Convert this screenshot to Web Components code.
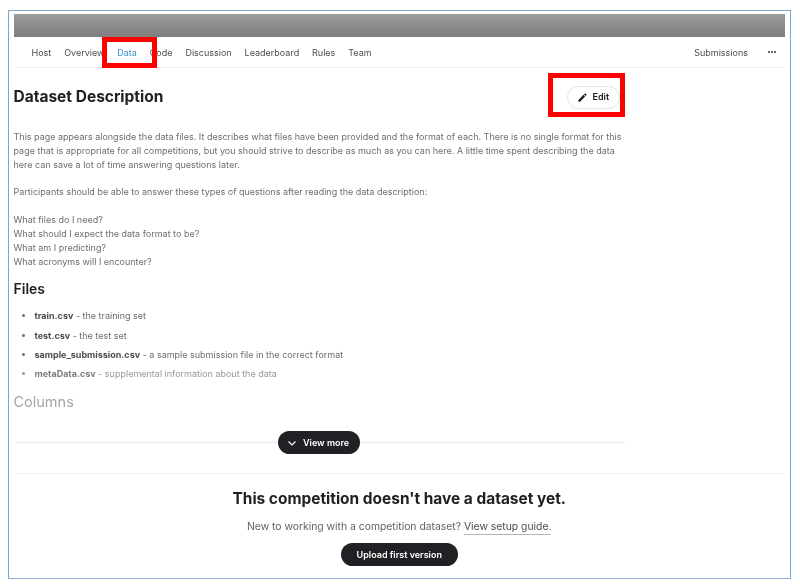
<!DOCTYPE html>
<html>
<head>
<meta charset="utf-8">
<title>Dataset Description</title>
<style>
  html, body { margin: 0; background: #fff; }
  body { font-family: Inter, "Liberation Sans", sans-serif; color: #202124; }
</style>
</head>
<body>
<shot-frame>
  <top-nav></top-nav>
  <data-description></data-description>
  <view-more></view-more>
  <empty-dataset></empty-dataset>
  <red-mark style="left:93px;top:26px;width:45px;height:21px"></red-mark>
  <red-mark style="left:539px;top:62px;width:67px;height:34px"></red-mark>
</shot-frame>

<script>
class ShotFrame extends HTMLElement {
    constructor() {
        super();
        this.attachShadow({mode: "open"}).innerHTML = `
        <style>
            :host {
                display: block;
                position: relative;
                box-sizing: border-box;
                margin: 10px 0 0 8px;
                width: 783px;
                height: 569px;
                border: 1.5px solid #7ea5cb;
                border-bottom-color: #8fb0d0;
                padding: 2.5px 5px 0 4.5px;
                overflow: hidden;
                background: #fff;
                filter: blur(.35px);
            }
            .banner {
                height: 23px;
                background: linear-gradient(#9b9b9b, #7f7f7f);
            }
        </style>
        <div class="banner"></div>
        <slot></slot>
        `;
    }
}

class TopNav extends HTMLElement {
    constructor() {
        super();
        const tabs = ["Host", "Overview", "Data", "Code", "Discussion", "Leaderboard", "Rules", "Team"];
        this.attachShadow({mode: "open"}).innerHTML = `
        <style>
            :host {
                display: flex;
                align-items: center;
                box-sizing: border-box;
                height: 31px;
                padding: 1px 9px 0 18px;
                border-bottom: 1px solid #efefef;
                font-size: 9px;
                color: #4a4c50;
            }
            .tabs { display: flex; gap: 12.9px; flex: 1; }
            .on { color: #3a94c8; }
            .more { margin-left: 20px; display: flex; gap: 1px; }
            .more i { width: 2px; height: 2px; border-radius: 50%; background: #333; display: block; }
        </style>
        <div class="tabs">
            ${tabs.map(t => `<span class="${t == "Data" ? "on" : ""}">${t}</span>`).join("")}
        </div>
        <span>Submissions</span>
        <span class="more"><i></i><i></i><i></i></span>
        `;
    }
}

class DataDescription extends HTMLElement {
    constructor() {
        super();
        this.attachShadow({mode: "open"}).innerHTML = `
        <style>
            :host {
                display: block;
                width: 611px;
                position: relative;
                font-size: 9px;
                line-height: 14.2px;
                color: #6b6e72;
            }
            header {
                display: flex;
                align-items: center;
                justify-content: space-between;
                height: 58px;
                padding: 1px 5px 0 0;
                box-sizing: border-box;
            }
            h1 { margin: 0; font-size: 15.5px; font-weight: 700; color: #202124; }
            .edit {
                display: flex;
                align-items: center;
                gap: 5px;
                box-sizing: border-box;
                height: 23px;
                width: 53px;
                padding-left: 9px;
                border: 1px solid #e4e4e4;
                border-radius: 12px;
                font-size: 9px;
                font-weight: 600;
                color: #202124;
            }
            p { margin: 0 0 13.2px; }
            .lead { margin-top: 4px; }
            .last { margin-bottom: 10.8px; }
            h2 { margin: 0 0 12px; font-size: 14px; line-height: 17px; font-weight: 600; color: #202124; }
            ul { margin: 0; padding: 0 0 0 21px; }
            li { margin-bottom: 5px; }
            li::marker { font-size: 9px; }
            b { font-weight: 700; color: #4a4c50; }
            .fade { opacity: .72; }
            .cols { margin: 12px 0 0; font-size: 14.5px; font-weight: 400; color: #a5a7aa; }
        </style>
        <header>
            <h1>Dataset Description</h1>
            <span class="edit">
                <svg width="11" height="11" viewBox="0 0 24 24" fill="#202124"><path d="M3 17.25V21h3.75L17.81 9.94l-3.75-3.75L3 17.25zM20.71 7.04a1 1 0 0 0 0-1.41l-2.34-2.34a1 1 0 0 0-1.41 0l-1.83 1.83 3.75 3.75 1.83-1.83z"/></svg>
                Edit
            </span>
        </header>
        <p class="lead">This page appears alongside the data files. It describes what files have been provided and the format of each. There is no single format for this page that is appropriate for all competitions, but you should strive to describe as much as you can here. A little time spent describing the data here can save a lot of time answering questions later.</p>
        <p>Participants should be able to answer these types of questions after reading the data description:</p>
        <p class="last">What files do I need?<br>What should I expect the data format to be?<br>What am I predicting?<br>What acronyms will I encounter?</p>
        <h2>Files</h2>
        <ul>
            <li><b>train.csv</b> - the training set</li>
            <li><b>test.csv</b> - the test set</li>
            <li><b>sample_submission.csv</b> - a sample submission file in the correct format</li>
            <li class="fade"><b>metaData.csv</b> - supplemental information about the data</li>
        </ul>
        <h2 class="cols">Columns</h2>
        `;
    }
}

class ViewMore extends HTMLElement {
    constructor() {
        super();
        this.attachShadow({mode: "open"}).innerHTML = `
        <style>
            :host {
                display: flex;
                justify-content: center;
                position: relative;
                width: 611px;
                margin-top: 21px;
            }
            :host::before {
                content: "";
                position: absolute;
                left: 0; right: 0; top: 11px;
                border-top: 1px solid #ececec;
            }
            .pill {
                position: relative;
                display: flex;
                align-items: center;
                gap: 6px;
                box-sizing: border-box;
                height: 23px;
                width: 82px;
                padding-left: 9px;
                border-radius: 12px;
                background: #202124;
                color: #fff;
                font-size: 9px;
                font-weight: 600;
            }
        </style>
        <span class="pill">
            <svg width="10" height="10" viewBox="0 0 10 10" fill="none" stroke="#fff" stroke-width="1.2"><path d="M1.5 3.5 5 7l3.5-3.5"/></svg>
            View more
        </span>
        `;
    }
}

class EmptyDataset extends HTMLElement {
    constructor() {
        super();
        this.attachShadow({mode: "open"}).innerHTML = `
        <style>
            :host {
                display: flex;
                flex-direction: column;
                align-items: center;
                margin-top: 19px;
                border-top: 1px solid #f0f0f0;
                color: #202124;
            }
            h3 { margin: 15px 0 0; font-size: 15.45px; line-height: 19px; font-weight: 700; }
            p { margin: 12px 0 0; font-size: 10.37px; line-height: 14px; color: #5f6368; }
            a { color: #4a4c50; border-bottom: 1px solid #b5b5b5; padding-bottom: 1px; }
            .btn {
                display: flex;
                align-items: center;
                justify-content: center;
                box-sizing: border-box;
                margin-top: 9px;
                width: 117px;
                height: 23px;
                border-radius: 12px;
                background: #202124;
                color: #fff;
                font-size: 9px;
                font-weight: 600;
            }
        </style>
        <h3>This competition doesn't have a dataset yet.</h3>
        <p>New to working with a competition dataset? <a>View setup guide.</a></p>
        <span class="btn">Upload first version</span>
        `;
    }
}

class RedMark extends HTMLElement {
    constructor() {
        super();
        this.attachShadow({mode: "open"}).innerHTML = `
        <style>
            :host {
                display: block;
                position: absolute;
                border: 5px solid #ff0000;
            }
        </style>
        `;
    }
}

customElements.define("shot-frame", ShotFrame);
customElements.define("top-nav", TopNav);
customElements.define("data-description", DataDescription);
customElements.define("view-more", ViewMore);
customElements.define("empty-dataset", EmptyDataset);
customElements.define("red-mark", RedMark);
</script>
</body>
</html>
